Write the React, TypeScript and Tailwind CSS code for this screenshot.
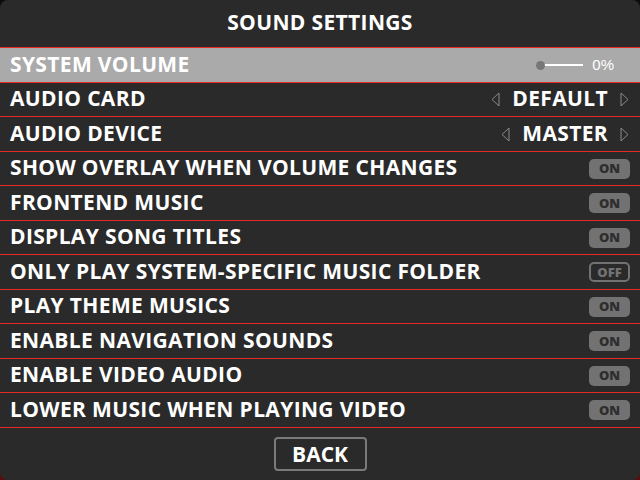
import type { ReactNode } from "react";

type Row = {
  label: string;
  kind: "slider" | "list" | "toggle";
  value?: string;
  on?: boolean;
};

const rows: Row[] = [
  { label: "SYSTEM VOLUME", kind: "slider", value: "0%" },
  { label: "AUDIO CARD", kind: "list", value: "DEFAULT" },
  { label: "AUDIO DEVICE", kind: "list", value: "MASTER" },
  { label: "SHOW OVERLAY WHEN VOLUME CHANGES", kind: "toggle", on: true },
  { label: "FRONTEND MUSIC", kind: "toggle", on: true },
  { label: "DISPLAY SONG TITLES", kind: "toggle", on: true },
  { label: "ONLY PLAY SYSTEM-SPECIFIC MUSIC FOLDER", kind: "toggle", on: false },
  { label: "PLAY THEME MUSICS", kind: "toggle", on: true },
  { label: "ENABLE NAVIGATION SOUNDS", kind: "toggle", on: true },
  { label: "ENABLE VIDEO AUDIO", kind: "toggle", on: true },
  { label: "LOWER MUSIC WHEN PLAYING VIDEO", kind: "toggle", on: true },
];

export default function App() {
  return (
    <div className="h-[480px] w-[640px] bg-gradient-to-b from-[#0c0c0c] via-[#141010] to-[#5a0c0c] font-['Open_Sans',sans-serif]">
      <div className="flex h-full flex-col rounded-lg bg-[#2a2a2a]">
        <header className="flex h-[48px] items-center justify-center border-b border-[#e82a2a] pb-[2px]">
          <h1 className="text-[21px] font-bold tracking-[0.35px] text-white">SOUND SETTINGS</h1>
        </header>

        <ul className="flex flex-col">
          {rows.map((row, i) => (
            <SettingRow key={row.label} row={row} index={i} />
          ))}
        </ul>

        <div className="flex flex-1 items-center justify-center pb-[1px]">
          <button className="h-[34px] w-[93px] rounded-[4px] border-2 border-[#7a7a7a] pb-[2px] text-[21px] font-bold text-white">
            BACK
          </button>
        </div>
      </div>
    </div>
  );
}

function SettingRow({ row, index }: { row: Row; index: number }) {
  let right: ReactNode = null;
  if (row.kind === "slider") right = <Slider value={row.value!} />;
  if (row.kind === "list") right = <ListValue value={row.value!} />;
  if (row.kind === "toggle") right = <Toggle on={!!row.on} />;

  return (
    <li
      className={`flex items-center justify-between border-b border-[#e82a2a] px-[10px] ${
        index % 2 === 0 ? "h-[35px]" : "h-[34px]"
      } ${index === 0 ? "bg-[#aaaaaa]" : ""}`}
    >
      <span className="pb-[2px] text-[21px] font-bold leading-none tracking-[0.35px] text-white">
        {row.label}
      </span>
      {right}
    </li>
  );
}

function Slider({ value }: { value: string }) {
  return (
    <div className="flex items-center">
      <div className="relative flex h-[10px] w-[47px] items-center">
        <div className="h-[2px] w-full bg-white" />
        <div className="absolute left-0 h-[9px] w-[9px] rounded-full bg-[#777777]" />
      </div>
      <span className="ml-[9px] mr-[16px] font-['Liberation_Sans_Narrow','Liberation_Sans',sans-serif] text-[15px] text-white">
        {value}
      </span>
    </div>
  );
}

function Arrow({ dir }: { dir: "left" | "right" }) {
  return (
    <svg width="9" height="15" viewBox="0 0 9 15" className="text-[#8a8a8a]">
      <path
        d={dir === "left" ? "M8 1 L1 7.5 L8 14 Z" : "M1 1 L8 7.5 L1 14 Z"}
        fill="none"
        stroke="currentColor"
        strokeWidth="1"
      />
    </svg>
  );
}

function ListValue({ value }: { value: string }) {
  return (
    <div className="flex items-center gap-[12px] pr-[1px]">
      <Arrow dir="left" />
      <span className="pb-[2px] text-[21px] font-bold leading-none tracking-[0.35px] text-white">{value}</span>
      <Arrow dir="right" />
    </div>
  );
}

function Toggle({ on }: { on: boolean }) {
  return (
    <span
      className={`flex h-[20px] w-[41px] items-center justify-center rounded-[5px] text-[13px] font-extrabold leading-none ${
        on ? "bg-[#727272] text-[#2e2e2e]" : "border-2 border-[#727272] text-[#727272]"
      }`}
    >
      {on ? "ON" : "OFF"}
    </span>
  );
}
